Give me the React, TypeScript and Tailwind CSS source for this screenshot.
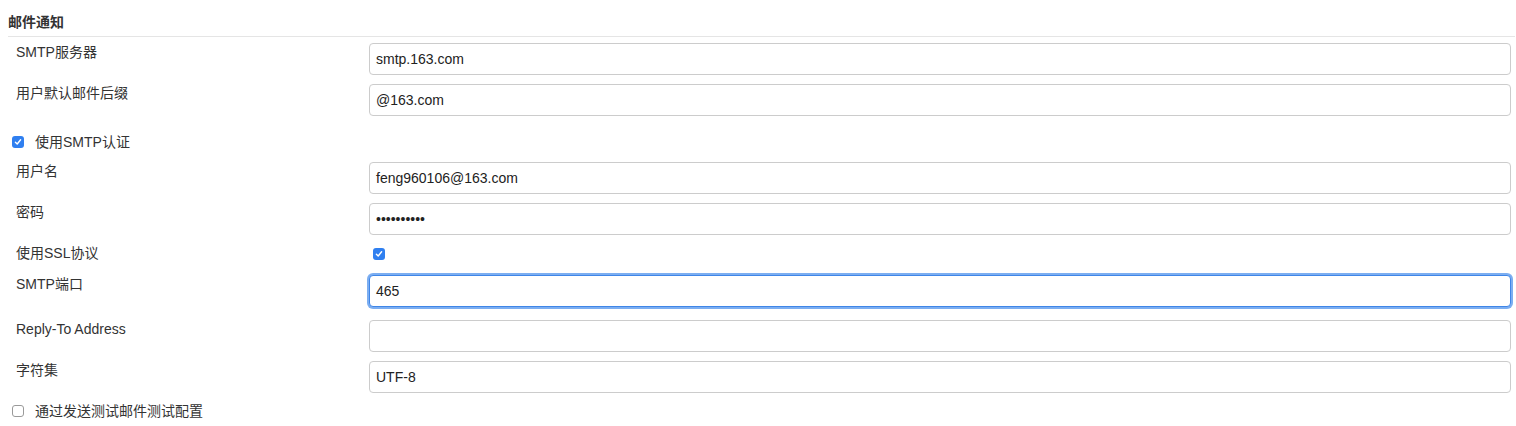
import React from "react";

function Check({ checked }: { checked: boolean }) {
  if (checked) {
    return (
      <span className="flex h-[12px] w-[12px] shrink-0 items-center justify-center rounded-[3px] bg-[#2f7ff0]">
        <svg width="8" height="8" viewBox="0 0 8 8" fill="none">
          <path d="M1.4 4.2 L3.2 6 L6.6 1.8" stroke="white" strokeWidth="1.4" strokeLinecap="round" strokeLinejoin="round" />
        </svg>
      </span>
    );
  }
  return <span className="block h-[12px] w-[12px] shrink-0 rounded-[3px] border border-[#9a9a9a] bg-white" />;
}

function Field({
  label,
  value,
  mt,
  focused,
}: {
  label: string;
  value: string;
  mt: string;
  focused?: boolean;
}) {
  return (
    <div className={`flex items-start ${mt}`}>
      <div className="w-[369px] shrink-0 pl-4 leading-[18px] text-[#333]">{label}</div>
      <div
        className={`mr-[5px] flex h-[32px] flex-1 items-center rounded-[4px] border bg-white px-[6px] text-[#222] ${
          focused
            ? "border-[#3f86e8] shadow-[0_0_0_2px_rgba(80,147,236,0.75)]"
            : "border-[#cccccc]"
        }`}
      >
        {value}
      </div>
    </div>
  );
}

export default function App() {
  return (
    <div
      className="w-[1516px] bg-white text-[14px] text-[#333]"
      style={{ fontFamily: '"Liberation Sans", "Noto Sans CJK SC", sans-serif' }}
    >
      <div className="ml-2 mr-[1px] h-[37px] border-b border-[#e5e5e5] pt-[13px] font-bold leading-[18px]">
        邮件通知
      </div>
      <Field label="SMTP服务器" value="smtp.163.com" mt="mt-[6px]" />
      <Field label="用户默认邮件后缀" value="@163.com" mt="mt-[9px]" />
      <div className="mt-[16px] flex h-[20px] items-center gap-[11px] pl-3">
        <Check checked />
        <span>使用SMTP认证</span>
      </div>
      <Field label="用户名" value="feng960106@163.com" mt="mt-[10px]" />
      <Field label="密码" value="••••••••••" mt="mt-[9px]" />
      <div className="mt-[9px] flex h-[20px] items-start">
        <div className="w-[369px] shrink-0 pl-4 leading-[18px]">使用SSL协议</div>
        <div className="ml-1 mt-[4px]">
          <Check checked />
        </div>
      </div>
      <Field label="SMTP端口" value="465" mt="mt-[11px]" focused />
      <Field label="Reply-To Address" value="" mt="mt-[13px]" />
      <Field label="字符集" value="UTF-8" mt="mt-[9px]" />
      <div className="mt-[8px] flex h-[20px] items-center gap-[11px] pl-3">
        <Check checked={false} />
        <span>通过发送测试邮件测试配置</span>
      </div>
    </div>
  );
}
